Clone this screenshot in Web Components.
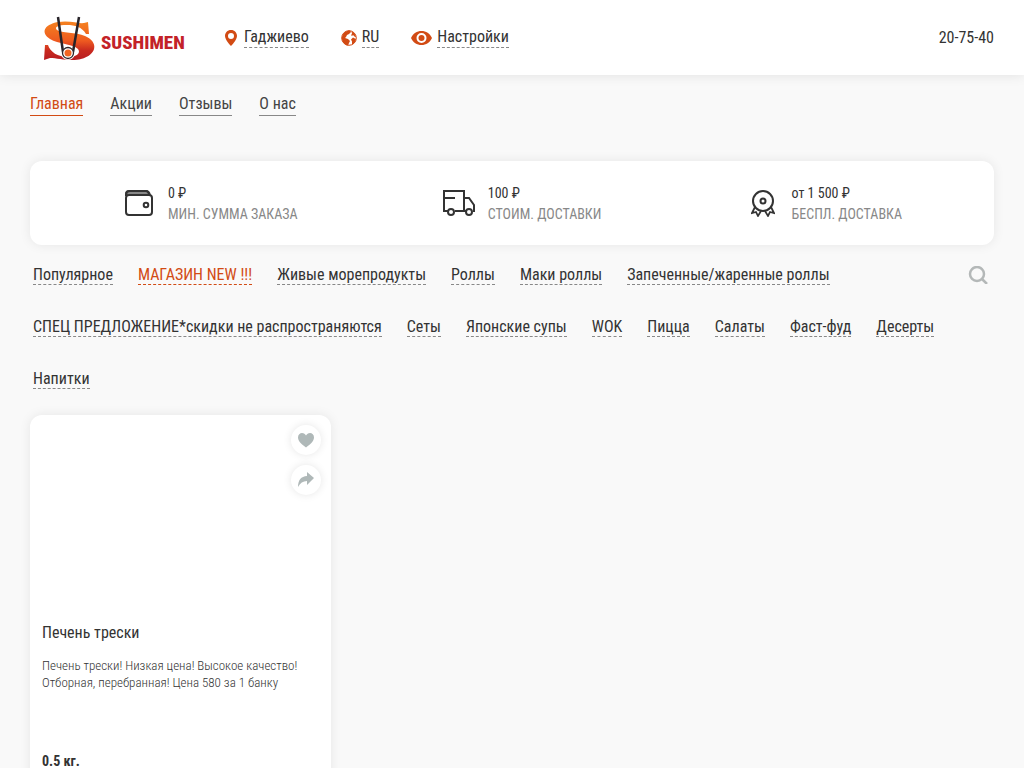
<!DOCTYPE html>
<html lang="ru">
<head>
<meta charset="utf-8">
<meta name="viewport" content="width=device-width, initial-scale=1">
<title>Sushimen</title>
<style>
  body {
    margin: 0;
    background: #f9f9f9;
    color: #333;
    font: 16px/20px "Roboto Condensed", "Liberation Sans Narrow", Roboto, sans-serif;
    overflow-x: hidden;
  }
</style>
</head>
<body>
<sushi-app></sushi-app>
<script>
const define = (name, html) => {
  const template = document.createElement('template');
  template.innerHTML = html;
  customElements.define(name, class extends HTMLElement {
    constructor() {
      super();
      this.attachShadow({ mode: 'open' }).append(template.content.cloneNode(true));
    }
  });
};

define('sushi-logo', `
<style>
  :host { display: block; }
  a { display: block; text-decoration: none; }
  svg { display: block; width: 160px; height: 56px; }
</style>
<a href="#" aria-label="Sushimen">
<svg viewBox="0 0 160 56">
  <defs><linearGradient id="s" x1="0" y1="0" x2="0" y2="1">
    <stop offset="0" stop-color="#f58220"/><stop offset=".5" stop-color="#ee5a20"/><stop offset=".75" stop-color="#c92a1f"/><stop offset="1" stop-color="#b71c22"/>
  </linearGradient></defs>
  <path fill="url(#s)" d="M58 12 L59 24 L56 24 C52 17 45 15 37 15 C28 15 24 17 27 20 C31 23 46 22 55 26 C69 32 67 45 51 49 C41 52 28 48 20 48 L14 50 L15 35 L18 35 C20 42 28 47 38 47 C47 47 51 43 48 39 C43 34 28 34 20 29 C11 23 13 15 28 12 C40 10 49 14 54 13 Z"/>
  <circle cx="38" cy="43" r="7" fill="#fff"/>
  <path d="M28 7 L33 42 M49 7 L43 42" fill="none" stroke="#272329" stroke-width="2.5"/>
  <circle cx="38" cy="43" r="5.500" fill="#fff" stroke="#302428" stroke-width="1.300"/>
  <circle cx="38" cy="43" r="3.500" fill="#f26522"/>
  <text x="71" y="39" font-family="Roboto Condensed, Liberation Sans Narrow, sans-serif" font-size="19" font-weight="800" fill="#c32228">SUSHIMEN</text>
</svg></a>`);

define('header-link', `
<style>
  :host { display: block; }
  a { display: flex; align-items: center; gap: 5px; color: inherit; text-decoration: none; }
  span { border-bottom: 1px dashed #888; }
</style>
<a href="#"><slot name="icon"></slot><span><slot></slot></span></a>`);

define('page-header', `
<style>
  :host { display: block; background: #fff; box-shadow: 0 0 12px rgba(0,0,0,.1); }
  header { display: flex; align-items: center; height: 75px; padding: 0 30px; }
  sushi-logo { margin-right: 34px; }
  nav { display: flex; gap: 32px; }
  svg { display: block; fill: #d24b14; }
  .phone { margin-left: auto; color: inherit; text-decoration: none; }
</style>
<header>
  <sushi-logo></sushi-logo>
  <nav>
    <header-link><svg slot="icon" width="15" height="18" viewBox="0 0 15 18"><path fill-rule="evenodd" d="M7 1C3.400 1 1 3.700 1 7c0 4 6 10 6 10s6-6 6-10c0-3.300-2.400-6-6-6Zm0 3a3 3 0 1 1 0 6 3 3 0 0 1 0-6Z"/></svg>Гаджиево</header-link>
    <header-link><svg slot="icon" width="16" height="18" viewBox="0 0 16 18"><circle cx="8" cy="9" r="7.300" fill="#fff" stroke="#d24b14" stroke-width="1"/><path d="M1 8C2 4 5 1.500 9 1.500L10 3 8 5 6 6 5 8l-1 1 3 1 2 2-1 2-1 2.500C3 16 .5 12 1 8Zm9.500-5.500c2 .500 4 2.500 4.500 5.500l-1 0-2-2-1 1-1-1 1-1Zm1.500 6 3 1.500c-.5 3-2 4.500-4 5.500l0-3-1-2Z"/></svg>RU</header-link>
    <header-link><svg slot="icon" width="21" height="18" viewBox="0 0 21 18"><path fill-rule="evenodd" d="M0 9C2 4.500 6 2 10.500 2s8.500 2.500 10.500 7c-2 4.500-6 7-10.500 7S2 13.500 0 9Zm10.500-5a5 5 0 1 0 0 10 5 5 0 0 0 0-10Z"/><circle cx="10.500" cy="9" r="3"/></svg>Настройки</header-link>
  </nav>
  <a class="phone" href="tel:207540">20-75-40</a>
</header>`);

define('main-nav', `
<style>
  :host { display: block; }
  nav { display: flex; gap: 27px; }
  a { color: #444; text-decoration: none; line-height: 22px; border-bottom: 1px solid #888; }
  a.current { color: #d24b14; border-bottom-color: #d24b14; }
</style>
<nav><a href="#" class="current" aria-current="page">Главная</a><a href="#">Акции</a><a href="#">Отзывы</a><a href="#">О нас</a></nav>`);

define('order-fact', `
<style>
  :host { display: flex; align-items: center; font-size: 14px; line-height: 21px; }
  .icon { display: flex; justify-content: center; width: 58px; }
  .text { padding-top: 2px; }
  .label { color: #888; }
</style>
<div class="icon"><slot name="icon"></slot></div>
<div class="text"><div><slot name="value"></slot></div><div class="label"><slot></slot></div></div>`);

define('order-facts', `
<style>
  :host { display: block; }
  section { display: flex; justify-content: space-between; align-items: center; height: 84px; padding: 0 92px 0 80px; border-radius: 12px; background: #fff; box-shadow: 0 0 12px rgba(0,0,0,.08); box-sizing: border-box; }
  svg { display: block; fill: none; stroke: #333; stroke-width: 2; }
</style>
<section>
  <order-fact><svg slot="icon" width="30" height="28" viewBox="0 0 30 28"><path fill="#888" d="M5 2h17q3 0 3 5H3Q1 2 5 2Z"/><rect x="2" y="6" width="26" height="20" rx="3" fill="#fff"/><path d="M2 7V5q0-3 4-3h16q3 0 4 4"/><circle cx="22" cy="16" r="2.300"/></svg><span slot="value">0 ₽</span>МИН. СУММА ЗАКАЗА</order-fact>
  <order-fact><svg slot="icon" width="32" height="28" viewBox="0 0 32 28"><path d="M5 22H1V2h20v20H12M1 9h11M21 9h5l5 7v6h-1M23 22h-2"/><circle cx="8" cy="23" r="3"/><circle cx="26" cy="23" r="3"/></svg><span slot="value">100 ₽</span>СТОИМ. ДОСТАВКИ</order-fact>
  <order-fact><svg slot="icon" width="24" height="28" viewBox="0 0 24 28"><circle cx="12" cy="12" r="10"/><circle cx="12" cy="12" r="2.500"/><path stroke-width="1.700" d="m4 18-3 6 4-1 2 4 3-5m10-4 3 6-4-1-2 4-3-5"/></svg><span slot="value">от 1 500 ₽</span>БЕСПЛ. ДОСТАВКА</order-fact>
</section>`);

define('category-nav', `
<style>
  :host { display: flex; align-items: flex-start; line-height: 18px; }
  nav { display: flex; flex-wrap: wrap; flex: 1; gap: 33px 25px; padding-left: 3px; }
  a { color: inherit; text-decoration: none; border-bottom: 1px dashed #888; }
  a.accent { color: #d24b14; border-bottom-color: #d24b14; }
  button { display: grid; place-items: center; height: 18px; padding: 0; border: 0; background: none; margin-right: 6px; }
  svg { display: block; fill: none; stroke: #b4b8b8; stroke-width: 2.500; }
</style>
<nav>
  <a href="#">Популярное</a><a href="#" class="accent">МАГАЗИН NEW !!!</a><a href="#">Живые морепродукты</a><a href="#">Роллы</a><a href="#">Маки роллы</a><a href="#">Запеченные/жаренные роллы</a><a href="#">СПЕЦ ПРЕДЛОЖЕНИЕ*скидки не распространяются</a><a href="#">Сеты</a><a href="#">Японские супы</a><a href="#">WOK</a><a href="#">Пицца</a><a href="#">Салаты</a><a href="#">Фаст-фуд</a><a href="#">Десерты</a><a href="#">Напитки</a>
</nav>
<button type="button" aria-label="Поиск"><svg width="20" height="18" viewBox="0 1 20 18"><circle cx="9" cy="9" r="7"/><path d="m14 14 5 5"/></svg></button>`);

define('product-card', `
<style>
  :host { display: block; position: relative; box-sizing: border-box; padding: 208px 12px 24px; border-radius: 12px; background: #fff; box-shadow: 0 0 12px rgba(0,0,0,.08); }
  .actions { position: absolute; top: 10px; right: 10px; display: grid; gap: 10px; }
  button { display: grid; place-items: center; width: 30px; height: 30px; padding: 0; border: 0; border-radius: 50%; background: #fff; box-shadow: 0 0 8px rgba(0,0,0,.1); }
  svg { display: block; fill: #afb8b8; }
  h2 { margin: 0 0 14px; font-size: 16px; font-weight: 400; line-height: 20px; }
  p { margin: 0; min-height: 94px; font-size: 13px; font-weight: 300; line-height: 17px; }
  .weight { font-size: 14px; font-weight: 700; line-height: 20px; }
</style>
<div class="actions">
  <button type="button" aria-label="В избранное"><svg width="18" height="16" viewBox="0 0 18 16"><path d="M9 15.500C6 13 1 10 1 5.500 1 2.500 3 1 5 1s3 1 4 2.500C10 2 11 1 13 1s4 1.500 4 4.500C17 10 12 13 9 15.500Z"/></svg></button>
  <button type="button" aria-label="Поделиться"><svg width="18" height="16" viewBox="0 0 18 16"><path d="M10 0l7 6-7 7V9C6 9 3 11 1 15 1 8 4 4.500 10 4Z"/></svg></button>
</div>
<h2><slot name="title"></slot></h2>
<p><slot></slot></p>
<div class="weight"><slot name="weight"></slot></div>`);

define('sushi-app', `
<style>
  :host { display: block; }
  main { padding: 18px 30px 30px; }
  order-facts { margin: 45px 0 21px; }
  .products { display: grid; grid-template-columns: repeat(auto-fill, 301px); gap: 30px; margin-top: 26px; }
</style>
<page-header></page-header>
<main>
  <main-nav></main-nav>
  <order-facts></order-facts>
  <category-nav></category-nav>
  <div class="products">
    <product-card><span slot="title">Печень трески</span>Печень трески! Низкая цена! Высокое качество! Отборная, перебранная! Цена 580 за 1 банку<span slot="weight">0.5 кг.</span></product-card>
  </div>
</main>`);
</script>
</body>
</html>
